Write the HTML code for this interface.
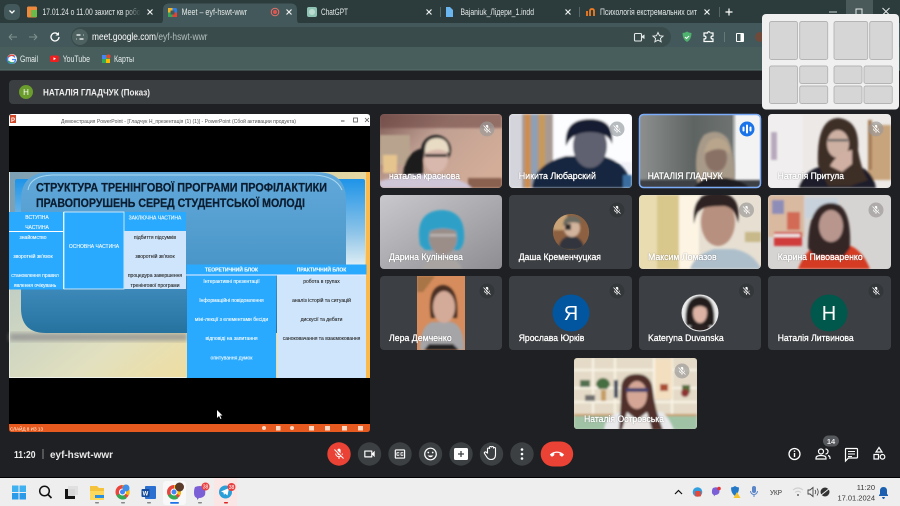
<!DOCTYPE html>
<html lang="uk">
<head>
<meta charset="utf-8">
<title>Meet – eyf-hswt-wwr</title>
<style>
html,body{margin:0;padding:0;background:#1f2023;width:900px;height:506px;overflow:hidden}
svg{display:block;filter:blur(.35px)}
text{font-family:"Liberation Sans","Noto Sans CJK SC",sans-serif}
.tab{font-size:8.8px;fill:#e4e9e8}
.nm{font-size:9.5px;fill:#fff;stroke:#fff;stroke-width:.25;paint-order:stroke}
.st{font-size:5px;fill:#fff;text-anchor:middle;stroke:#fff;stroke-width:.08}
.sd{font-size:5px;fill:#222;text-anchor:middle;stroke:#222;stroke-width:.08}
.x{stroke:#eef2f1;stroke-width:1.2;fill:none}
</style>
</head>
<body>
<svg xmlns="http://www.w3.org/2000/svg" width="900" height="506" viewBox="0 0 900 506">
<defs>
<filter id="b1" x="-20%" y="-20%" width="140%" height="140%"><feGaussianBlur stdDeviation="1"/></filter>
<filter id="b2" x="-20%" y="-20%" width="140%" height="140%"><feGaussianBlur stdDeviation="2"/></filter>
<filter id="ts"><feDropShadow dx="0" dy="0" stdDeviation=".6" flood-color="#000" flood-opacity=".55"/></filter>
<symbol id="micoff" viewBox="0 0 24 24"><path d="M19 11h-1.700c0 .74-.16 1.430-.43 2.050l1.230 1.230c.56-.98.9-2.090.9-3.280zm-4.020.17c0-.06.02-.11.02-.17V5c0-1.660-1.340-3-3-3S9 3.340 9 5v.18l5.980 5.990zM4.270 3L3 4.270l6.010 6.010V11c0 1.660 1.330 3 2.990 3 .22 0 .44-.03.65-.08l1.660 1.660c-.71.33-1.500.52-2.310.52-2.760 0-5.300-2.100-5.300-5.100H5c0 3.410 2.720 6.230 6 6.720V21h2v-3.280c.91-.13 1.770-.45 2.540-.9L19.730 21 21 19.730 4.270 3z" fill="#fff"/></symbol>
<linearGradient id="panel" x1="0" y1="0" x2="0" y2="1"><stop offset="0" stop-color="#62a9da"/><stop offset=".55" stop-color="#4b97c9"/><stop offset="1" stop-color="#26729f"/></linearGradient>
<linearGradient id="inner" x1="0" y1="0" x2="0" y2="1"><stop offset="0" stop-color="#1f94e8"/><stop offset=".6" stop-color="#8ec4e8"/><stop offset="1" stop-color="#e8f2f5"/></linearGradient>
<linearGradient id="floor" x1="0" y1="0" x2="1" y2=".4"><stop offset="0" stop-color="#bccbc4"/><stop offset=".5" stop-color="#e2e0bf"/><stop offset="1" stop-color="#f9dc88"/></linearGradient>
<linearGradient id="slbg" x1="0" y1="0" x2="1" y2="0"><stop offset="0" stop-color="#7c9fb3"/><stop offset="1" stop-color="#e8d9a2"/></linearGradient>
<linearGradient id="t1" x1="0" y1="0" x2="1" y2=".6"><stop offset="0" stop-color="#7e5a55"/><stop offset=".45" stop-color="#c0a093"/><stop offset="1" stop-color="#d3ad98"/></linearGradient>
<linearGradient id="t3" x1="0" y1="0" x2="1" y2="0"><stop offset="0" stop-color="#8d908f"/><stop offset=".45" stop-color="#5e6462"/><stop offset=".76" stop-color="#6e7372"/><stop offset=".8" stop-color="#f3f3f3"/></linearGradient>
<linearGradient id="t5" x1="0" y1="0" x2="1" y2="1"><stop offset="0" stop-color="#c9c9cd"/><stop offset="1" stop-color="#8e8e92"/></linearGradient>
<linearGradient id="fade" x1="0" y1="0" x2="1" y2="0"><stop offset="0" stop-color="#2c3c3c" stop-opacity="0"/><stop offset="1" stop-color="#2c3c3c"/></linearGradient>
<clipPath id="c1"><rect x="380" y="114" width="122" height="74" rx="4"/></clipPath>
<clipPath id="c2"><rect x="509" y="114" width="123" height="74" rx="4"/></clipPath>
<clipPath id="c3"><rect x="639" y="114" width="122" height="74" rx="4"/></clipPath>
<clipPath id="c4"><rect x="768" y="114" width="123" height="74" rx="4"/></clipPath>
<clipPath id="c5"><rect x="380" y="195" width="122" height="74" rx="4"/></clipPath>
<clipPath id="c7"><rect x="639" y="195" width="122" height="74" rx="4"/></clipPath>
<clipPath id="c8"><rect x="768" y="195" width="123" height="74" rx="4"/></clipPath>
<clipPath id="c9"><rect x="417" y="276" width="48" height="74"/></clipPath>
<clipPath id="c13"><rect x="574" y="358" width="123" height="71" rx="3"/></clipPath>
<clipPath id="av1"><circle cx="571" cy="232" r="18"/></clipPath>
<clipPath id="av2"><circle cx="700" cy="313" r="17.500"/></clipPath>
</defs>

<!-- page bg -->
<rect width="900" height="506" fill="#1f2023"/>

<!-- chrome: tab strip -->
<rect width="900" height="24" fill="#2c3c3c"/>
<rect y="23" width="900" height="25" fill="#43585a"/>
<rect y="47" width="900" height="23" fill="#475e5c"/>
<rect y="69.500" width="900" height="1" fill="#5a6e6c"/>
<rect x="4" y="4" width="16" height="16" rx="5" fill="#43585a"/>
<path d="M9.500 10.500l2.500 2.500 2.500-2.500" stroke="#fff" stroke-width="1.300" fill="none"/>

<!-- tab 1 -->
<rect x="27" y="6.500" width="10" height="11" rx="1.500" fill="#ef8a3c"/><rect x="31" y="10" width="6" height="7" fill="#6cbb4a"/>
<text class="tab" x="42.500" y="15" textLength="98" lengthAdjust="spacingAndGlyphs">17.01.24 о 11.00 захист кв робо</text>
<rect x="125" y="5" width="16" height="14" fill="url(#fade)"/>
<path class="x" d="M147.500 9.500l5 5m0-5l-5 5"/>
<!-- active tab -->
<path d="M158 24c4 0 5-2 5-5V10c0-4 2-6.500 6-6.500h122c4 0 6 2.500 6 6.500v9c0 3 1 5 5 5z" fill="#43585a"/>
<rect x="168" y="8" width="9" height="9" rx="1.500" fill="#2f7de1"/><rect x="168" y="8" width="4.500" height="4.500" fill="#f0b429"/><rect x="168" y="12.500" width="4.500" height="4.500" fill="#3aa457"/><rect x="172.500" y="12.500" width="4.500" height="4.500" fill="#e34336"/><rect x="170.500" y="10.500" width="4" height="4" fill="#43585a"/>
<text class="tab" x="181.600" y="15" textLength="65.500" lengthAdjust="spacingAndGlyphs">Meet – eyf-hswt-wwr</text>
<circle cx="275" cy="12" r="3.800" fill="none" stroke="#e8706a" stroke-width="1"/><circle cx="275" cy="12" r="2" fill="#e8504a"/>
<path class="x" d="M286.500 9.500l5 5m0-5l-5 5"/>
<!-- tab 3 -->
<rect x="307" y="7" width="10" height="10" rx="2" fill="#8fc4b4"/><circle cx="312" cy="12" r="3" fill="#bcdcd2"/>
<text class="tab" x="321" y="15" textLength="27" lengthAdjust="spacingAndGlyphs">ChatGPT</text>
<path class="x" d="M426.500 9.500l5 5m0-5l-5 5"/>
<rect x="440" y="7" width="1" height="10" fill="#566"/>
<!-- tab 4 -->
<path d="M446 7h4l3 3v7h-7z" fill="#6bb6ee"/>
<text class="tab" x="460.500" y="15" textLength="73.500" lengthAdjust="spacingAndGlyphs">Bajaniuk_Лідери_1.indd</text>
<path class="x" d="M565.500 9.500l5 5m0-5l-5 5"/>
<rect x="579" y="7" width="1" height="10" fill="#566"/>
<!-- tab 5 -->
<path d="M587 16v-5m3 5v-5q0-2 2-2t2 2v5" stroke="#ef7d22" stroke-width="1.800" fill="none"/>
<text class="tab" x="600" y="15" textLength="97" lengthAdjust="spacingAndGlyphs">Психологія екстремальних сит</text>
<path class="x" d="M704.500 9.500l5 5m0-5l-5 5"/>
<rect x="719" y="7" width="1" height="10" fill="#566"/>
<path d="M729 8.500v7m-3.500-3.500h7" stroke="#fff" stroke-width="1.200"/>
<!-- window controls -->
<rect x="846" y="0" width="27" height="14" fill="#4a5959"/>
<path d="M829 12h8" stroke="#c7d0cf"/><rect x="856" y="9" width="6" height="6" fill="none" stroke="#e4e9e8"/>
<path d="M882.500 8l7 7m0-7l-7 7" stroke="#e4e9e8" stroke-width="1"/>

<!-- toolbar -->
<path d="M9 37h8m-8 0l3-3m-3 3l3 3" stroke="#7e918f" stroke-width="1.100" fill="none"/>
<path d="M37 37h-8m8 0l-3-3m3 3l-3 3" stroke="#7e918f" stroke-width="1.100" fill="none"/>
<path d="M59 37a4 4 0 1 1-1.300-3" stroke="#fff" stroke-width="1.300" fill="none"/><path d="M59 32v3.500h-3.500z" fill="#fff"/>
<rect x="71" y="27" width="600" height="20" rx="10" fill="#3a4b4b"/>
<circle cx="80" cy="37" r="8" fill="#4e6161"/>
<path d="M76.500 35h4m2.500 0h.5M76.500 39h.5m2.500 0h4" stroke="#fff" stroke-width="1.300"/>
<text x="92" y="40.200" font-size="10" fill="#fff" textLength="64" lengthAdjust="spacingAndGlyphs">meet.google.com</text>
<text x="156" y="40.200" font-size="10" fill="#b3bfbe" textLength="51.500" lengthAdjust="spacingAndGlyphs">/eyf-hswt-wwr</text>
<rect x="634.500" y="33.500" width="7" height="7.500" rx="1" fill="none" stroke="#e4e9e8" stroke-width="1.100"/><path d="M642 36l2.500-1.500v4.500l-2.500-1.500z" fill="#e4e9e8"/>
<path d="M658 32.500l1.500 3.200 3.500.4-2.600 2.300.7 3.400-3.100-1.700-3.100 1.700.7-3.400-2.600-2.300 3.500-.4z" fill="none" stroke="#e4e9e8" stroke-width="1"/>
<path d="M682.500 33q2.500 0 4.500-1.500 2 1.500 4.500 1.500 0 6.500-4.500 9-4.500-2.500-4.500-9z" fill="#4fb26f"/><path d="M685 37l1.500 1.500 2.500-2.500" stroke="#fff" stroke-width="1" fill="none"/>
<path d="M704 33h3.500q.5-2 2-1t1 1h2.500v3q-2 0-2 1.500t2 1.500v2.500h-9v-2.500q2 0 2-1.500t-2-1.500z" fill="none" stroke="#fff" stroke-width="1.200"/>
<rect x="724" y="32" width="1" height="10" fill="#64797a"/>
<rect x="736" y="33" width="8" height="9" rx="1" fill="#fff"/><rect x="737" y="34" width="3.500" height="7" fill="#43585a"/>
<circle cx="760" cy="37" r="5" fill="#6f4a3a"/>

<!-- bookmarks -->
<circle cx="12" cy="59" r="5" fill="#fff"/><path d="M15 57.500a4 4 0 1 0 .5 2h-3.500" fill="none" stroke="#4285f4" stroke-width="1.300"/><path d="M8.500 57a4 4 0 0 1 6-.8" fill="none" stroke="#ea4335" stroke-width="1.300"/><path d="M8.500 61a4 4 0 0 0 5 1.500" fill="none" stroke="#34a853" stroke-width="1.300"/>
<text x="20" y="62" font-size="8.800" fill="#e8eeed" textLength="18" lengthAdjust="spacingAndGlyphs">Gmail</text>
<rect x="50" y="55.500" width="9" height="6.500" rx="1.800" fill="#ef1f1f"/><path d="M53.500 57.200l2.500 1.500-2.500 1.500z" fill="#fff"/>
<text x="62.700" y="62" font-size="8.800" fill="#e8eeed" textLength="27.300" lengthAdjust="spacingAndGlyphs">YouTube</text>
<path d="M102 55h8v8h-8z" fill="#34a853"/><path d="M102 55h4v4h-4z" fill="#4285f4"/><path d="M106 59h4v4h-4z" fill="#fbbc04"/><circle cx="108.500" cy="56.500" r="2" fill="#ea4335"/>
<text x="114" y="62" font-size="8.800" fill="#e8eeed" textLength="20" lengthAdjust="spacingAndGlyphs">Карты</text>

<!-- header bar -->
<rect x="9" y="80" width="882" height="24" rx="4" fill="#3c3f41"/>
<circle cx="26" cy="92" r="7" fill="#6a9d2c"/>
<text x="26" y="95" font-size="8" fill="#fff" text-anchor="middle">Н</text>
<text x="43" y="95.500" font-size="9.500" font-weight="bold" fill="#eceded" textLength="107" lengthAdjust="spacingAndGlyphs">НАТАЛІЯ ГЛАДЧУК (Показ)</text>

<!-- PowerPoint window -->
<rect x="9" y="114" width="361" height="318" rx="3" fill="#000"/>
<path d="M9 126v-9q0-3 3-3h355q3 0 3 3v9z" fill="#fff"/>
<rect x="10" y="115" width="6" height="8" fill="#d2492a"/><text x="13" y="122" font-size="6" fill="#fff" text-anchor="middle" font-weight="bold">P</text>
<text x="61" y="123" font-size="5.500" fill="#555" textLength="235" lengthAdjust="spacingAndGlyphs">Демонстрация PowerPoint - [Гладчук Н_презентація (1) (1)] - PowerPoint (Сбой активации продукта)</text>
<path d="M341 121h3.500" stroke="#555"/><rect x="353.500" y="118" width="4" height="4" fill="none" stroke="#555" stroke-width=".8"/><path d="M365 118l4 4m0-4l-4 4" stroke="#555" stroke-width=".8"/>

<!-- slide -->
<rect x="9" y="172" width="361" height="206" fill="url(#slbg)"/>
<rect x="366" y="172" width="4" height="206" fill="#fcba4d"/>
<rect x="15" y="179" width="350" height="90" rx="2" fill="url(#inner)"/>
<rect x="9.500" y="265" width="356" height="112.500" fill="url(#floor)"/>
<rect x="9.500" y="333" width="178" height="8" fill="#8f8f8f" filter="url(#b2)" opacity=".75"/>
<path d="M21 200q0-28 30-28h265q30 0 30 28v130q0 3-3 3h-297q-25 0-25-25z" fill="url(#panel)"/>
<path d="M28 190q2-14 24-15h262q22 1 28 15" fill="none" stroke="#a9d8f0" stroke-width="1"/>
<path d="M9.500 172v205.500h177" fill="none" stroke="#eef2e8" stroke-width=".9"/>
<text x="36" y="191.500" font-size="12" font-weight="bold" fill="#0b1d30" stroke="#0b1d30" stroke-width=".25" textLength="291" lengthAdjust="spacingAndGlyphs">СТРУКТУРА ТРЕНІНГОВОЇ ПРОГРАМИ ПРОФІЛАКТИКИ</text>
<text x="36" y="207" font-size="12" font-weight="bold" fill="#0b1d30" stroke="#0b1d30" stroke-width=".25" textLength="269" lengthAdjust="spacingAndGlyphs">ПРАВОПОРУШЕНЬ СЕРЕД СТУДЕНТСЬКОЇ МОЛОДІ</text>

<rect x="9" y="212" width="54.500" height="77.500" fill="#2aaaff"/>
<rect x="9" y="231" width="54" height="1" fill="#fff"/>
<rect x="63" y="212" width="1" height="77" fill="#dff"/>
<rect x="64" y="212" width="60" height="77" fill="#2aaaff" stroke="#e8f6ff" stroke-width=".8"/>
<rect x="124.500" y="212" width="61.500" height="19" fill="#2aaaff"/>
<rect x="124.500" y="231" width="61.500" height="58" fill="#cfe5fb"/>
<text class="st" x="37" y="219">ВСТУПНА</text><text class="st" x="37" y="229">ЧАСТИНА</text>
<text class="st" x="94" y="248">ОСНОВНА ЧАСТИНА</text>
<text class="st" x="155" y="219.500">ЗАКЛЮЧНА ЧАСТИНА</text>
<text class="st" x="33" y="239">знайомство</text>
<text class="st" x="33" y="258">зворотній зв'язок</text>
<text class="st" x="35" y="277">становлення правил</text>
<text class="st" x="35" y="287">явлення очікувань</text>
<text class="sd" x="155" y="239">підбиття підсумків</text>
<text class="sd" x="155" y="258">зворотній зв'язок</text>
<text class="sd" x="155" y="277">процедура завершення</text>
<text class="sd" x="155" y="287">тренінгової програми</text>

<rect x="186.500" y="264.500" width="90" height="10" fill="#2aaaff"/>
<rect x="276.500" y="264.500" width="90" height="10" fill="#2aaaff"/>
<rect x="187" y="275.500" width="89" height="102.500" fill="#2aaaff"/>
<rect x="277" y="275.500" width="89" height="102.500" fill="#cfe5fb"/>
<rect x="186" y="274.500" width="180" height="1" fill="#eef"/>
<text class="st" x="231.500" y="271.500" font-weight="bold">ТЕОРЕТИЧНИЙ БЛОК</text>
<text class="st" x="321.500" y="271.500" font-weight="bold">ПРАКТИЧНИЙ БЛОК</text>
<text class="st" x="231.500" y="283">Інтерактивні презентації</text>
<text class="st" x="231.500" y="302">Інформаційні повідомлення</text>
<text class="st" x="231.500" y="321">міні-лекції з елементами бесіди</text>
<text class="st" x="231.500" y="340">відповіді на запитання</text>
<text class="st" x="231.500" y="359.500">опитування думок</text>
<text class="sd" x="321.500" y="283">робота в групах</text>
<text class="sd" x="321.500" y="302">аналіз історій та ситуацій</text>
<text class="sd" x="321.500" y="321">дискусії та дебати</text>
<text class="sd" x="321.500" y="340">саноковачання та взаємоковання</text>

<path d="M217 410v8l2-2 1.500 3 1-.5-1.500-3h2.500z" fill="#fff"/>

<path d="M9 424h361v5q0 3-3 3H12q-3 0-3-3z" fill="#e75a1f"/>
<text x="10" y="430.500" font-size="4.500" fill="#ffe" textLength="33" lengthAdjust="spacingAndGlyphs">СЛАЙД 8 ИЗ 13</text>
<g fill="#fbd9c6"><circle cx="264" cy="428" r="2"/><rect x="276" y="426" width="4.500" height="4.500"/><circle cx="292" cy="428" r="2"/><rect x="309" y="426" width="5" height="4.500"/><rect x="325" y="426" width="5" height="4.500"/><rect x="342" y="426" width="5" height="4.500"/><rect x="358" y="426" width="5" height="4.500"/></g>

<!-- TILE 1 -->
<rect x="380" y="114" width="122" height="74" rx="4" fill="url(#t1)"/>
<g clip-path="url(#c1)"><g filter="url(#b1)">
<rect x="380" y="114" width="122" height="14" fill="#6e4a44" opacity=".6"/>
<rect x="380" y="135" width="30" height="30" fill="#b8a48e"/><rect x="383" y="155" width="14" height="18" fill="#e6c48e"/>
<path d="M403 176q1-24 20-28v34h-20z" fill="#1b1a1c"/>
<rect x="468" y="178" width="34" height="10" fill="#8a6050"/>
<circle cx="436" cy="150" r="15" fill="#222"/>
<ellipse cx="436" cy="158" rx="12" ry="15" fill="#d8b8ac"/>
<path d="M425 153q-1-15 12-15 12 0 12 15-10-7-24 0z" fill="#e8dcc4"/>
<rect x="425" y="154" width="22" height="3" fill="#2a2a2a"/>
<path d="M380 188v-7q30-8 50-6 30 1 42 13z" fill="#cfc6d8"/>
</g></g>
<!-- TILE 2 -->
<rect x="509" y="114" width="123" height="74" rx="4" fill="#f0f2f8"/>
<g clip-path="url(#c2)"><g filter="url(#b1)">
<rect x="509" y="114" width="14" height="74" fill="#d4d4dc"/>
<rect x="522" y="114" width="31" height="74" fill="#a89a92"/>
<rect x="525" y="114" width="5" height="74" fill="#cf8d48"/><rect x="532" y="114" width="5" height="74" fill="#8ca1b8"/><rect x="539" y="114" width="6" height="74" fill="#c79a5c"/>
<rect x="553" y="114" width="79" height="48" fill="#fcfdff"/>
<path d="M532 188q2-24 34-32h36q26 6 30 32z" fill="#13283f"/>
<path d="M623 175h9v13h-9z" fill="#3a6ea0"/>
<ellipse cx="590" cy="146" rx="17" ry="22" fill="#5e6070"/>
<path d="M566 146q-3-27 24-27 25 0 22 25-4-12-22-12-18 0-24 14z" fill="#141a30"/>
</g></g>
<!-- TILE 3 -->
<rect x="639" y="114" width="122" height="74" rx="4" fill="url(#t3)"/>
<g clip-path="url(#c3)"><g filter="url(#b1)">
<rect x="639" y="180" width="122" height="8" fill="#3c3f44"/>
<path d="M698 185q-6-35 6-50 14-8 24 4 8 18 6 40z" fill="#a89a88"/>
<path d="M694 188q6-10 16-10h16q16 2 24 10z" fill="#1d1e24"/>
<ellipse cx="716" cy="158" rx="11" ry="14" fill="#8a7166"/>
<path d="M704 154q2-16 14-16 12 2 12 16-10-10-26 0z" fill="#b8a58c"/>
</g></g>
<rect x="639.500" y="114.500" width="121" height="73" rx="4" fill="none" stroke="#7cacf8" stroke-width="1.500"/>
<!-- TILE 4 -->
<rect x="768" y="114" width="123" height="74" rx="4" fill="#ece9e6"/>
<g clip-path="url(#c4)"><g filter="url(#b1)">
<rect x="768" y="114" width="35" height="74" fill="#f0eeee"/>
<rect x="771" y="132" width="6" height="28" fill="#b8a9be"/>
<rect x="868" y="125" width="23" height="55" fill="#c8a47c"/><rect x="868" y="120" width="4" height="50" fill="#a67e58"/>
<path d="M798 188q8-22 30-22h24q20 0 24 22z" fill="#1c1e2c"/>
<path d="M818 165q-2-46 20-47 22 2 20 32 4 22 10 30l-18 6h-22z" fill="#3e2e28"/>
<ellipse cx="838" cy="144" rx="11" ry="14" fill="#cdb0a2"/>
<rect x="828" y="139" width="20" height="2.500" fill="#666"/>
<path d="M830 166q8-14 22-16v14l-10 8z" fill="#d0b0a2"/>
</g></g>
<!-- TILE 5 -->
<rect x="380" y="195" width="122" height="74" rx="4" fill="url(#t5)"/>
<g clip-path="url(#c5)"><g filter="url(#b1)">
<path d="M422 269q4-12 20-12t20 12z" fill="#a9a4a2"/>
<path d="M420 245q-6-34 22-35 24 1 22 30-1 7-5 10h-34z" fill="#2ea0c8"/>
<ellipse cx="443" cy="238" rx="14" ry="17" fill="#9b8e88"/>
<path d="M428 232q4-13 16-13 11 0 14 13-15-7-30 0z" fill="#2ea0c8"/>
<rect x="430" y="234" width="26" height="2.500" fill="#b9b4b0"/>
</g></g>
<!-- TILE 6 -->
<rect x="509" y="195" width="123" height="74" rx="4" fill="#3c3f43"/>
<g clip-path="url(#av1)"><rect x="553" y="214" width="36" height="36" fill="#a8723e"/><g filter="url(#b1)"><rect x="553" y="214" width="36" height="36" fill="#8c6040"/><rect x="553" y="214" width="14" height="16" fill="#c9a478"/><path d="M558 250q2-14 13-14t14 14z" fill="#31363c"/><ellipse cx="572" cy="228" rx="8" ry="9" fill="#d2b39c"/><path d="M563 226q0-10 9-10t9 8q-10-4-18 2z" fill="#6b6a5e"/><rect x="565" y="224" width="6" height="6" fill="#2c2c2c"/></g></g>
<!-- TILE 7 -->
<rect x="639" y="195" width="122" height="74" rx="4" fill="#e6dfd2"/>
<g clip-path="url(#c7)"><g filter="url(#b1)">
<rect x="639" y="195" width="40" height="74" fill="#d9c88c"/>
<rect x="639" y="195" width="18" height="74" fill="#e8dcb0"/>
<rect x="679" y="195" width="20" height="74" fill="#fdf4e4"/>
<rect x="745" y="232" width="16" height="10" fill="#c8b98a"/>
<path d="M690 269q4-14 24-20h20q20 4 27 20z" fill="#aebfcc"/>
<ellipse cx="718" cy="222" rx="17" ry="24" fill="#b8907f"/>
<path d="M694 224q-4-32 24-31 24 0 20 30-3-16-14-17-20 0-24 4-4 4-6 14z" fill="#2e2422"/>
</g></g>
<!-- TILE 8 -->
<rect x="768" y="195" width="123" height="74" rx="4" fill="#d6d4d2"/>
<g clip-path="url(#c8)"><g filter="url(#b1)">
<rect x="768" y="195" width="36" height="42" fill="#d9b9a0"/><rect x="772" y="200" width="12" height="14" fill="#8d8db8"/><rect x="787" y="212" width="13" height="18" fill="#d26a54"/>
<rect x="774" y="232" width="28" height="14" fill="#d03a3a"/><rect x="774" y="234" width="26" height="3" fill="#f0e8e8"/>
<rect x="805" y="198" width="33" height="20" fill="#c8d2dc"/>
<path d="M798 269q8-20 20-24h30q14 4 22 24z" fill="#d43a24"/>
<path d="M808 248q0-46 24-45 20 1 18 45l-6 8h-30z" fill="#352826"/>
<ellipse cx="831" cy="226" rx="12" ry="16" fill="#b8968e"/>
</g></g>
<!-- TILE 9 -->
<rect x="380" y="276" width="122" height="74" rx="4" fill="#3c3f43"/>
<rect x="417" y="276" width="48" height="74" fill="#d68c5c"/>
<g clip-path="url(#c9)"><g filter="url(#b1)">
<path d="M417 276h18l-12 16h-6z" fill="#a87446"/>
<path d="M420 350q0-24 12-28h20q12 4 12 28z" fill="#a5a5a8"/>
<path d="M424 350l5-6 24 0 6 6z" fill="#222"/>
<path d="M431 318q-4-32 12-33 16 1 14 33z" fill="#4a2e22"/>
<ellipse cx="444" cy="307" rx="11" ry="16" fill="#d4aa98"/>
</g></g>
<!-- TILE 10 -->
<rect x="509" y="276" width="123" height="74" rx="4" fill="#3c3f43"/>
<circle cx="571" cy="313" r="18.500" fill="#01569f"/>
<text x="571" y="320" font-size="20" fill="#fff" text-anchor="middle">Я</text>
<!-- TILE 11 -->
<rect x="639" y="276" width="122" height="74" rx="4" fill="#3c3f43"/>
<circle cx="700" cy="313" r="18.500" fill="#e8e8e8"/>
<g clip-path="url(#av2)"><g filter="url(#b1)"><rect x="680" y="295" width="40" height="36" fill="#ededed"/><path d="M686 326q-3-29 14-30 17 1 14 30z" fill="#201a1c"/><ellipse cx="700" cy="313" rx="7" ry="10" fill="#dcb3a4"/><path d="M692 310q0-10 8-10t8 10q-8-8-16 0z" fill="#201a1c"/><path d="M686 332q4-8 14-8t14 8z" fill="#2a2020"/></g></g>
<!-- TILE 12 -->
<rect x="768" y="276" width="123" height="74" rx="4" fill="#3c3f43"/>
<circle cx="829" cy="313" r="18.500" fill="#00574b"/>
<text x="829" y="320" font-size="20" fill="#fff" text-anchor="middle">Н</text>
<!-- TILE 13 -->
<rect x="574" y="358" width="123" height="71" rx="3" fill="#ded4c0"/>
<g clip-path="url(#c13)"><g filter="url(#b1)" opacity=".95">
<rect x="574" y="359" width="123" height="55" fill="#e4dbc8"/>
<path d="M574 370h123M574 388h123M574 402h123" stroke="#fbf6ea" stroke-width="2"/>
<path d="M593 358v60M615 358v60M654 358v60M672 358v60" stroke="#fbf6ea" stroke-width="2"/>
<rect x="655" y="359" width="17" height="40" fill="#f4dfc0"/>
<rect x="580" y="380" width="10" height="7" fill="#4a6a4a"/><path d="M596 385a7 7 0 0 1 14 0l-3 4h-8z" fill="#3c6a3a"/><rect x="601" y="390" width="5" height="11" fill="#c49a5c"/>
<rect x="614" y="380" width="4" height="18" fill="#223a5a"/><rect x="585" y="395" width="10" height="6" fill="#6a6a6a"/>
<rect x="660" y="384" width="8" height="7" fill="#a8452c"/>
<path d="M682 385h8v8h-8z" fill="#4a6a30"/><circle cx="685" cy="393" r="4" fill="#8a2a2a"/>
<rect x="574" y="414" width="123" height="16" fill="#9cc2a4"/><rect x="574" y="414" width="123" height="2" fill="#c8955c"/>
<path d="M604 430q2-16 18-18h40q6 4 12 18z" fill="#e8eaee"/>
<path d="M619 430q2-30 2-40 0-16 16-16 14 0 16 16 2 20 10 40z" fill="#4a2622"/>
<ellipse cx="637" cy="395" rx="10" ry="14" fill="#d4a494"/>
<rect x="626" y="388" width="22" height="4" fill="#3a3a6a"/>
<path d="M627 412l10 8 10-8 5 18h-30z" fill="#e8e6e4"/>
</g></g>

<!-- mic badges -->
<g fill="#9c9a98" fill-opacity=".7">
<circle cx="487" cy="129" r="7.500"/><circle cx="617" cy="129" r="7.500" fill="#9aa0a4"/><circle cx="876" cy="129" r="7.500"/><circle cx="746.500" cy="210" r="7.500"/><circle cx="876" cy="210" r="7.500"/><circle cx="682" cy="371" r="7.500"/>
</g>
<g fill="#34373a"><circle cx="617" cy="210" r="7.500"/><circle cx="487" cy="291" r="7.500"/><circle cx="617" cy="291" r="7.500"/><circle cx="746.500" cy="291" r="7.500"/><circle cx="876" cy="291" r="7.500"/></g>
<circle cx="747" cy="129" r="7.500" fill="#1a73e8"/>
<g fill="#fff"><rect x="742.500" y="126.500" width="2" height="5" rx="1"/><rect x="746" y="124.500" width="2" height="9" rx="1"/><rect x="749.500" y="126.500" width="2" height="5" rx="1"/></g>
<use href="#micoff" x="482" y="124" width="10" height="10"/>
<use href="#micoff" x="612" y="124" width="10" height="10"/>
<use href="#micoff" x="871" y="124" width="10" height="10"/>
<use href="#micoff" x="612" y="205" width="10" height="10"/>
<use href="#micoff" x="741.500" y="205" width="10" height="10"/>
<use href="#micoff" x="871" y="205" width="10" height="10"/>
<use href="#micoff" x="482" y="286" width="10" height="10"/>
<use href="#micoff" x="612" y="286" width="10" height="10"/>
<use href="#micoff" x="741.500" y="286" width="10" height="10"/>
<use href="#micoff" x="871" y="286" width="10" height="10"/>
<use href="#micoff" x="677" y="366" width="10" height="10"/>

<!-- names -->
<g class="names" filter="url(#ts)">
<text class="nm" x="389" y="179" textLength="71" lengthAdjust="spacingAndGlyphs">наталья краснова</text>
<text class="nm" x="518.700" y="179" textLength="77.300" lengthAdjust="spacingAndGlyphs">Никита Любарский</text>
<text class="nm" x="647.700" y="179" textLength="75" lengthAdjust="spacingAndGlyphs">НАТАЛІЯ ГЛАДЧУК</text>
<text class="nm" x="777.700" y="179" textLength="66.300" lengthAdjust="spacingAndGlyphs">Наталія Притула</text>
<text class="nm" x="389" y="260" textLength="74" lengthAdjust="spacingAndGlyphs">Дарина Кулінічева</text>
<text class="nm" x="518.700" y="260" textLength="82.300" lengthAdjust="spacingAndGlyphs">Даша Кременчуцкая</text>
<text class="nm" x="648" y="260" textLength="68.700" lengthAdjust="spacingAndGlyphs">Максим Ломазов</text>
<text class="nm" x="777.700" y="260" textLength="85" lengthAdjust="spacingAndGlyphs">Карина Пивоваренко</text>
<text class="nm" x="389" y="341" textLength="62.700" lengthAdjust="spacingAndGlyphs">Лера Демченко</text>
<text class="nm" x="518.700" y="341" textLength="65.600" lengthAdjust="spacingAndGlyphs">Ярослава Юрків</text>
<text class="nm" x="648" y="341" textLength="75.700" lengthAdjust="spacingAndGlyphs">Kateryna Duvanska</text>
<text class="nm" x="777.700" y="341" textLength="76" lengthAdjust="spacingAndGlyphs">Наталія Литвинова</text>
<text class="nm" x="584" y="422" textLength="80" lengthAdjust="spacingAndGlyphs">Наталія Островська</text>
</g>

<!-- bottom bar -->
<text x="14" y="458" font-size="10" font-weight="bold" fill="#eee" textLength="21.500" lengthAdjust="spacingAndGlyphs">11:20</text>
<rect x="42.500" y="449" width="1" height="10" fill="#888"/>
<text x="50" y="458" font-size="10" font-weight="bold" fill="#e8e8e8" textLength="63" lengthAdjust="spacingAndGlyphs">eyf-hswt-wwr</text>

<circle cx="339" cy="454" r="11.700" fill="#ea4335"/>
<use href="#micoff" x="332.500" y="447.500" width="13" height="13"/>
<g fill="#3c4043"><circle cx="369.500" cy="454" r="11.700"/><circle cx="400" cy="454" r="11.700"/><circle cx="430.500" cy="454" r="11.700"/><circle cx="461" cy="454" r="11.700"/><circle cx="491.500" cy="454" r="11.700"/><circle cx="522" cy="454" r="11.700"/></g>
<g transform="translate(362.500 447) scale(.58)"><path d="M15 8v8H5V8h10m1-2H4c-.55 0-1 .45-1 1v10c0 .55.45 1 1 1h12c.55 0 1-.45 1-1v-3.500l4 4v-11l-4 4V7c0-.55-.45-1-1-1z" fill="#fff"/></g>
<g transform="translate(393 447) scale(.58)"><path d="M19 4H5c-1.100 0-2 .9-2 2v12c0 1.100.9 2 2 2h14c1.100 0 2-.9 2-2V6c0-1.100-.9-2-2-2zm0 14H5V6h14v12zM7 15h3c.55 0 1-.45 1-1v-1H9.500v.5h-2v-3h2v.5H11v-1c0-.55-.45-1-1-1H7c-.55 0-1 .45-1 1v4c0 .55.45 1 1 1zm7 0h3c.55 0 1-.45 1-1v-1h-1.500v.5h-2v-3h2v.5H18v-1c0-.55-.45-1-1-1h-3c-.55 0-1 .45-1 1v4c0 .55.45 1 1 1z" fill="#fff"/></g>
<circle cx="430.500" cy="454" r="5.800" fill="none" stroke="#fff" stroke-width="1.200"/>
<circle cx="428.300" cy="452.500" r=".9" fill="#fff"/><circle cx="432.700" cy="452.500" r=".9" fill="#fff"/>
<path d="M427.500 455.500q3 3.500 6 0z" fill="#fff"/>
<rect x="454" y="448" width="14" height="12" rx="1.500" fill="#fff"/>
<path d="M461 451v6m-3-3h6" stroke="#3c4043" stroke-width="1.300"/>
<path d="M487.500 453v-4q0-1 1-1t1 1v-1.500q0-1 1-1t1 1q0-1 1-1t1 1v1q0-1 1-1t1 1v6q0 5-4.500 5-3 0-4.500-3l-2-3q-.5-1 .5-1.500 1-.5 1.500.5z" fill="none" stroke="#fff" stroke-width="1.100"/>
<g fill="#fff"><circle cx="522" cy="449.500" r="1.300"/><circle cx="522" cy="454" r="1.300"/><circle cx="522" cy="458.500" r="1.300"/></g>
<rect x="540.700" y="441.500" width="32.500" height="25" rx="12.500" fill="#ea4335"/>
<g transform="translate(550 447.500) scale(.58)"><path d="M12 9c-1.600 0-3.150.25-4.600.72v3.100c0 .39-.23.74-.56.9-.98.49-1.870 1.120-2.660 1.850-.18.18-.43.28-.7.28-.28 0-.53-.11-.71-.29L.29 13.080c-.18-.17-.29-.42-.29-.7 0-.28.11-.53.29-.71C3.340 8.780 7.460 7 12 7s8.660 1.780 11.710 4.670c.18.18.29.43.29.71 0 .28-.11.53-.29.71l-2.480 2.480c-.18.18-.43.29-.71.29-.27 0-.52-.11-.7-.28-.79-.74-1.690-1.360-2.670-1.850-.33-.16-.56-.5-.56-.9v-3.100C15.150 9.250 13.600 9 12 9z" fill="#fff"/></g>

<circle cx="794.500" cy="454" r="5.500" fill="none" stroke="#fff" stroke-width="1.300"/>
<rect x="793.800" y="453" width="1.400" height="4" fill="#fff"/><rect x="793.800" y="450.500" width="1.400" height="1.400" fill="#fff"/>
<rect x="823" y="435.500" width="16" height="11" rx="5.500" fill="#55585c"/>
<text x="831" y="444" font-size="7.500" font-weight="bold" fill="#e8e8e8" text-anchor="middle">14</text>
<circle cx="821" cy="451.500" r="2.500" fill="none" stroke="#fff" stroke-width="1.200"/>
<path d="M816 459v-1q0-2.500 5-2.500t5 2.500v1z" fill="none" stroke="#fff" stroke-width="1.200"/>
<path d="M825.500 449a2.500 2.500 0 0 1 0 5M828 455.500q2 .7 2 2.500v1" fill="none" stroke="#fff" stroke-width="1.200"/>
<path d="M846 448.500h10.500q1 0 1 1v7.500q0 1-1 1h-8l-3 3v-11.500q0-1 .5-1z" fill="none" stroke="#fff" stroke-width="1.200"/>
<path d="M848 451.500h7m-7 2.500h7m-7 2.500h4" stroke="#fff" stroke-width=".9"/>
<path d="M879 447.500l3 4.500h-6z" fill="none" stroke="#fff" stroke-width="1.200"/>
<rect x="874" y="454.500" width="4.500" height="4.500" fill="none" stroke="#fff" stroke-width="1.200"/>
<circle cx="882.500" cy="456.800" r="2.300" fill="none" stroke="#fff" stroke-width="1.200"/>

<!-- taskbar -->
<rect y="477" width="900" height="1" fill="#000"/>
<rect y="478" width="900" height="28" fill="#eeeeee"/>
<g fill="#2b9ae8"><rect x="12" y="485.500" width="6.500" height="6.500" fill="#3fb0f0"/><rect x="19.500" y="485.500" width="6.500" height="6.500" fill="#3fb0f0"/><rect x="12" y="493" width="6.500" height="6.500"/><rect x="19.500" y="493" width="6.500" height="6.500"/></g>
<circle cx="44.500" cy="491" r="4.800" fill="none" stroke="#111" stroke-width="1.500"/><path d="M48 494.500l3.500 3.500" stroke="#111" stroke-width="1.700"/>
<rect x="68" y="486" width="10" height="9" fill="#e0e0e0"/><rect x="65" y="489" width="10" height="10" fill="#151515"/><rect x="68" y="489" width="7" height="7" fill="#d8d8d8"/>
<path d="M90 486h7l2 2h5v12H90z" fill="#f5c33b"/><rect x="90" y="491" width="14" height="9" fill="#fcd85c"/><rect x="95" y="495" width="9" height="3" fill="#2b8ee0"/>
<rect x="95" y="502" width="4" height="1.500" rx=".7" fill="#888"/>
<circle cx="122.500" cy="492" r="7" fill="#e8453c"/><path d="M122.500 492l-6 3.500a7 7 0 0 0 10 3z" fill="#34a853"/><path d="M122.500 485a7 7 0 0 1 6 10.500l-6-3.500z" fill="#fbbc04"/><circle cx="122.500" cy="492" r="3" fill="#4285f4" stroke="#fff"/><circle cx="126" cy="488" r="3.500" fill="#3f8ee8"/>
<rect x="121" y="502" width="4" height="1.500" rx=".7" fill="#888"/>
<rect x="145" y="486" width="11" height="13" rx="1" fill="#2b6fd0"/><rect x="141.500" y="489" width="8" height="8" rx="1" fill="#144a9c"/><text x="145.500" y="495.500" font-size="6" font-weight="bold" fill="#fff" text-anchor="middle">W</text>
<rect x="147" y="502" width="4" height="1.500" rx=".7" fill="#888"/>
<rect x="163" y="481" width="23" height="24" rx="3" fill="#f8f8f8"/>
<circle cx="174" cy="492" r="7" fill="#e8453c"/><path d="M174 492l-6 3.500a7 7 0 0 0 10 3z" fill="#34a853"/><path d="M174 485a7 7 0 0 1 6 10.500l-6-3.500z" fill="#fbbc04"/><circle cx="174" cy="492" r="3" fill="#4285f4" stroke="#fff"/><circle cx="179.500" cy="487" r="4.500" fill="#5a3a2a"/>
<rect x="170" y="502" width="9" height="1.800" rx=".9" fill="#1a73e8"/>
<path d="M195 487q5-2 9 0 2 3 1 8-2 3-6 3l-2 2v-2q-3-1-3-5 0-4 1-6z" fill="#7b5fd6"/><circle cx="205.500" cy="486.500" r="4" fill="#e84040"/><text x="205.500" y="488.500" font-size="5" fill="#fff" text-anchor="middle">38</text>
<rect x="198" y="502" width="4" height="1.500" rx=".7" fill="#888"/>
<rect x="214" y="478" width="23" height="28" fill="#fbe6e6"/>
<circle cx="225.500" cy="492" r="6.500" fill="#2a9fd8"/><path d="M221 491.500l8-3.500-1.500 7.500-2.500-2-1 1.500-.5-2.500z" fill="#fff"/><circle cx="231.500" cy="487" r="4" fill="#e84040"/><text x="231.500" y="489" font-size="5" fill="#fff" text-anchor="middle">38</text>
<rect x="224" y="502" width="4" height="1.500" rx=".7" fill="#d22"/>

<!-- tray -->
<path d="M675 494l3.500-3.500 3.500 3.500" stroke="#111" stroke-width="1.200" fill="none"/>
<circle cx="697.500" cy="492" r="4.800" fill="#2f9fe0"/><rect x="695" y="491" width="6" height="5.500" rx="1" fill="#e24a3b"/>
<path d="M713 488q3-1.500 5.500 0 1.500 2 .7 5-1.500 2-4 2l-1.300 1.500v-1.500q-2-.7-2-3 0-2.500 1-4z" fill="#7b5fd6"/><circle cx="719" cy="488.500" r="1.800" fill="#e83030"/>
<path d="M731 487.500q2 0 4-1.500 2 1.500 4 1.500 0 6-4 8.500-4-2.500-4-8.500z" fill="#2478c8"/><path d="M737 492l3.500 6h-7z" fill="#f6c431"/>
<rect x="752" y="486" width="4" height="7" rx="2" fill="#5b86c8"/><path d="M750.500 491a3.500 3.500 0 0 0 7 0M754 495v2" stroke="#5b86c8" fill="none"/>
<text x="770" y="495" font-size="7.500" fill="#333" textLength="12" lengthAdjust="spacingAndGlyphs">УКР</text>
<path d="M793 490q5-4 10 0M795 492.500q3-2.500 6 0" stroke="#d0d0d0" stroke-width="1.100" fill="none"/><circle cx="798" cy="495" r="1" fill="#666"/>
<path d="M808 490h2l3-2.500v9l-3-2.500h-2z" fill="none" stroke="#444" stroke-width=".9"/><path d="M815 490q1.500 2 0 4M817 488.500q2.500 3.500 0 7" stroke="#444" fill="none" stroke-width=".8"/>
<circle cx="825" cy="492" r="4.500" fill="#333"/><path d="M820 496l10-8" stroke="#eee"/>
<text x="875" y="490" font-size="7.500" fill="#333" text-anchor="end">11:20</text>
<text x="875" y="500.500" font-size="7.500" fill="#333" text-anchor="end">17.01.2024</text>
<path d="M879 496v-1l1-1v-3q0-4 3.500-4t3.500 4v3l1 1v1zM882 497h3q-.5 2-1.500 2t-1.500-2z" fill="#1a5fb0"/>

<!-- snap layouts popup -->
<rect x="762" y="14" width="137" height="95.500" rx="4" fill="#f0f0f0"/>
<g fill="#d6d6d6" stroke="#b4b4b4" stroke-width=".9">
<rect x="769.500" y="21.500" width="28" height="38" rx="2"/>
<rect x="799.700" y="21.500" width="28" height="38" rx="2"/>
<rect x="834" y="21.500" width="33.700" height="38" rx="2"/>
<rect x="869.700" y="21.500" width="22.600" height="38" rx="2"/>
<rect x="769.500" y="66" width="28" height="37.500" rx="2"/>
<rect x="799.700" y="66" width="28" height="17.500" rx="2"/>
<rect x="799.700" y="86" width="28" height="17.500" rx="2"/>
<rect x="834" y="66" width="28" height="17.500" rx="2"/>
<rect x="864" y="66" width="28.300" height="17.500" rx="2"/>
<rect x="834" y="86" width="28" height="17.500" rx="2"/>
<rect x="864" y="86" width="28.300" height="17.500" rx="2"/>
</g>
</svg>
</body>
</html>
